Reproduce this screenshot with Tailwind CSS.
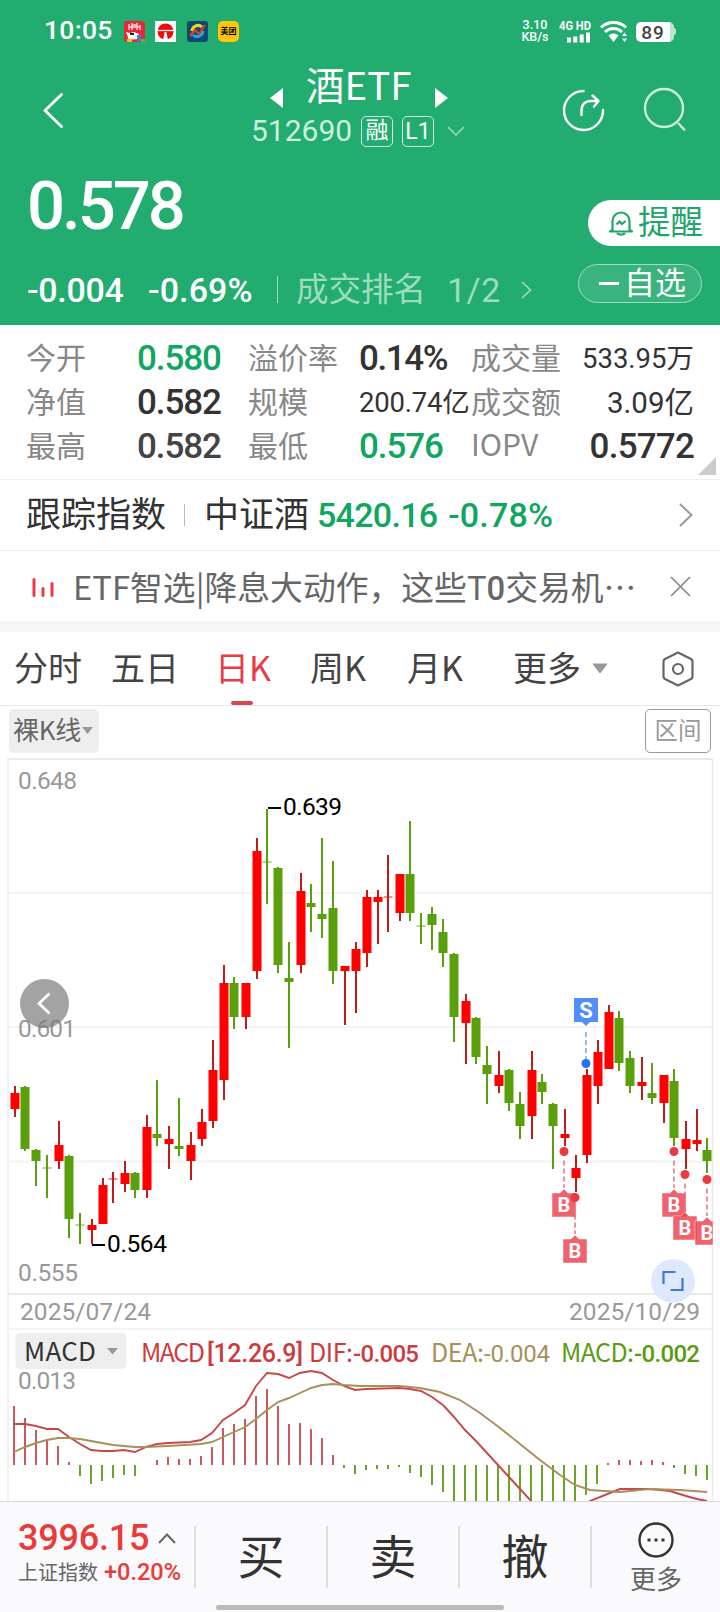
<!DOCTYPE html>
<html lang="zh-CN">

<head>
    <meta charset="UTF-8">
    <meta name="viewport" content="width=device-width, initial-scale=1.0">
    <title>酒ETF 512690</title>
    <script src="https://cdn.jsdelivr.net/npm/@tailwindcss/browser@4"></script>
</head>

<body class="w-[720px] h-[1612px] overflow-hidden bg-white font-['Roboto','Noto_Sans_CJK_SC',sans-serif] text-[#333] whitespace-nowrap">

    <!-- header -->
    <header class="h-[325px] bg-[#22ac6f] text-white">
        <!-- status bar -->
        <div class="h-[63px] flex items-center pl-[44px] pr-[44px]">
            <span class="w-[80px] text-[26.500px] font-medium leading-none tracking-[0.300px] -mt-[2px]">10:05</span>
            <svg class="w-[21px] h-[21px]" viewBox="0 0 21 21">
                <rect width="21" height="21" rx="3" fill="#e5283a" />
                <path d="M5 3v6M8 2v7M8 4h5M13 2v7M16 4v5M5 6h11" stroke="#ffd9d9" stroke-width="1.4" fill="none" />
                <path d="M2 11l4 1 4-1 5 2-2 5-8 1z" fill="#fff" />
                <path d="M6 13h4" stroke="#222" stroke-width="2" />
                <rect x="3" y="18" width="5" height="3" fill="#fbb917" />
                <rect x="13" y="14" width="4" height="6" fill="#3b7de0" />
                <rect x="17" y="18" width="4" height="3" fill="#5ab82f" />
            </svg>
            <svg class="w-[21px] h-[21px] ml-[10px]" viewBox="0 0 21 21">
                <rect width="21" height="21" fill="#fff" />
                <circle cx="10.5" cy="10.5" r="8" fill="#f00a0a" />
                <path d="M2 9.5h17" stroke="#fff" stroke-width="1.3" />
                <path d="M9.700 11h1.600l1.700 8H8z" fill="#fff" />
            </svg>
            <svg class="w-[21px] h-[21px] ml-[11px]" viewBox="0 0 21 21">
                <rect width="21" height="21" rx="3" fill="#0b4a70" />
                <path d="M5 10a6 6 0 0 1 10-4" stroke="#f7d21b" stroke-width="3" fill="none" />
                <path d="M16 10a6 6 0 0 1-10 4" stroke="#1fa5ea" stroke-width="3" fill="none" />
                <path d="M3 15l5-6 4 4 6-9" stroke="#e33b2e" stroke-width="2.2" fill="none" />
            </svg>
            <span class="w-[21px] h-[21px] ml-[10px] rounded-[5px] bg-[#ffc60a] text-black text-[8px] font-bold leading-[21px] text-center">美团</span>
            <div class="ml-auto w-[28px] text-[12.500px] font-medium leading-[12px] flex flex-col items-center -mt-[2px]">
                <span>3.10</span>
                <span>KB/s</span>
            </div>
            <svg class="ml-[10px] -mt-[4px] w-[34px] h-[28px]" viewBox="0 -4 34 28">
                <text x="0" y="9.500" font-size="12" font-weight="700" fill="#fff" textLength="32" lengthAdjust="spacingAndGlyphs">4G HD</text>
                <path d="M10 22.500v-5M16.300 22.500v-6M22.700 22.500v-8M29 22.500v-10" stroke="#fff" stroke-width="4" />
            </svg>
            <svg class="ml-[7px] w-[28px] h-[24px]" viewBox="0 0 28 24">
                <path d="M1 7.500a18 18 0 0 1 25 0M5 12a12 12 0 0 1 17 0" stroke="#fff" stroke-width="3" fill="none" />
                <path d="M8.500 15.500a7 7 0 0 1 10 0L13.500 22z" fill="#fff" />
                <path d="M22 16l2.500-3.500L27 16zM22 18.500h5L24.500 22z" fill="#fff" />
            </svg>
            <div class="ml-[8px] w-[38px] h-[20px] rounded-[5px] bg-white text-[#444] text-[19px] font-medium leading-[21px] text-center tracking-[1px] border-r-[4px] border-[#b9e5cf]">89</div>
            <span class="w-[2px] h-[7px] bg-[#b9e5cf] rounded-r"></span>
        </div>

        <!-- title row -->
        <div class="h-[97px] flex">
            <svg class="w-[22px] h-[36px] ml-[42px] mt-[30px]" viewBox="0 0 22 36">
                <path d="M19.500 1.500L3 17.500 19.500 33.500" fill="none" stroke="#fff" stroke-width="2.800" stroke-linecap="round" stroke-linejoin="round" />
            </svg>
            <div class="ml-[187px] w-[216px] flex flex-col">
                <div class="h-[48px] flex items-center font-['Noto_Sans_CJK_SC']">
                    <svg class="w-[14px] h-[20px] ml-[19px] mt-[22px]" viewBox="0 0 14 20"><path d="M0 10L13 0v20z" fill="#fff" /></svg>
                    <span class="ml-[22px] w-[108px] text-[38.500px] leading-none -mt-[7px]">酒ETF</span>
                    <svg class="w-[14px] h-[20px] ml-[20px] mt-[22px]" viewBox="0 0 14 20"><path d="M14 10L1 0v20z" fill="#fff" /></svg>
                </div>
                <div class="h-[40px] flex items-center">
                    <span class="w-[101px] text-[30px] leading-none text-[#cdf0de]">512690</span>
                    <span class="ml-[9px] w-[32px] h-[31px] border border-[#cdf0de] rounded-[5px] text-center text-[23px] leading-[28px]">融</span>
                    <span class="ml-[9px] w-[32px] h-[31px] border border-[#cdf0de] rounded-[5px] text-center text-[23px] leading-[29px]">L1</span>
                    <svg class="ml-[13px] w-[18px] h-[10px]" viewBox="0 0 18 10"><path d="M1 1l8 8 8-8" fill="none" stroke="#a0dcbf" stroke-width="1.500" /></svg>
                </div>
            </div>
            <svg class="ml-[94px] mt-[25px] w-[44px] h-[44px]" viewBox="0 0 44 44">
                <path d="M22.500 3A19.500 19.500 0 1 0 42 22" fill="none" stroke="#fff" stroke-width="2.400" stroke-linecap="round" />
                <path d="M20.500 27v-4c0-7 4-10 9-10h7M31.500 7.500l6 5.500-4.500 5.500" fill="none" stroke="#fff" stroke-width="2.400" stroke-linecap="round" stroke-linejoin="round" />
            </svg>
            <svg class="ml-[38px] mt-[24px] w-[44px] h-[46px]" viewBox="0 0 44 46">
                <circle cx="21" cy="21" r="19" fill="none" stroke="#cdf0de" stroke-width="2.400" />
                <path d="M35 36l7 7.500" stroke="#cdf0de" stroke-width="2.400" />
            </svg>
        </div>

        <!-- price -->
        <div class="h-[92px] flex">
            <span class="ml-[27px] mt-[13px] text-[67px] font-medium leading-none tracking-[-3px]">0.578</span>
            <div class="ml-auto mt-[40px] w-[132px] h-[46px] rounded-l-full bg-white text-[#22a56b] flex items-center">
                <svg class="ml-[20px] w-[26px] h-[27px]" viewBox="0 0 26 27">
                    <path d="M4.500 20V11a8.500 8.500 0 0 1 17 0v9l2.500 1.500H2z" fill="none" stroke="#22a56b" stroke-width="2.200" stroke-linejoin="round" />
                    <path d="M9 23a4.500 3 0 0 0 8 0M8.500 14.500l3-3 2.500 2.500 3.500-3" fill="none" stroke="#22a56b" stroke-width="2.200" />
                </svg>
                <span class="ml-[4px] text-[32.500px] leading-none mt-px">提醒</span>
            </div>
        </div>
        <div class="h-[73px] flex">
            <div class="flex items-center h-[76px] text-[34px] font-medium leading-none tracking-[-0.300px]">
                <span class="ml-[27px] w-[121px]">-0.004</span>
                <span class="w-[129px] tracking-[0.100px]">-0.69%</span>
            </div>
            <div class="flex items-center h-[75px] text-[#9edcbe]">
                <span class="w-px h-[27px] bg-[#9edcbe]"></span>
                <span class="ml-[18px] text-[32.500px] leading-none mt-px">成交排名</span>
                <span class="ml-[21px] text-[34px] leading-none tracking-[0.500px]">1/2</span>
                <svg class="ml-[20px] w-[11px] h-[18px]" viewBox="0 0 11 18"><path d="M1 1l8.500 8L1 17" fill="none" stroke="#9edcbe" stroke-width="1.700" /></svg>
            </div>
            <div class="ml-auto mr-[18px] mt-[12px] w-[124px] h-[39px] rounded-full border border-[#a0dcbf] bg-[#3ab47f] flex items-center">
                <span class="ml-[20px] w-[20px] h-[2.500px] bg-white"></span>
                <span class="ml-[5px] text-[31px] leading-none">自选</span>
            </div>
        </div>
    </header>

    <!-- quote grid -->
    <section class="relative h-[155px] pt-[12px] border-b border-[#eee] text-[30px] leading-[44px]">
        <div class="h-[44px] flex items-center">
            <span class="ml-[26px] w-[111px] text-[#888]">今开</span>
            <span class="w-[111px] text-[35px] font-medium text-[#0fa65f] tracking-[-1.100px]">0.580</span>
            <span class="w-[111px] text-[#888]">溢价率</span>
            <span class="w-[112px] text-[35px] font-medium tracking-[-1.400px]">0.14%</span>
            <span class="text-[#888]">成交量</span>
            <span class="ml-auto mr-[26px] text-[27.500px]">533.95万</span>
        </div>
        <div class="h-[44px] flex items-center">
            <span class="ml-[26px] w-[111px] text-[#888]">净值</span>
            <span class="w-[111px] text-[35px] font-medium tracking-[-1.100px]">0.582</span>
            <span class="w-[111px] text-[#888]">规模</span>
            <span class="w-[112px] text-[27.500px] tracking-[-0.200px]">200.74亿</span>
            <span class="text-[#888]">成交额</span>
            <span class="ml-auto mr-[26px] text-[29.500px]">3.09亿</span>
        </div>
        <div class="h-[44px] flex items-center">
            <span class="ml-[26px] w-[111px] text-[#888]">最高</span>
            <span class="w-[111px] text-[35px] font-medium text-[#444] tracking-[-1.100px]">0.582</span>
            <span class="w-[111px] text-[#888]">最低</span>
            <span class="w-[112px] text-[35px] font-medium text-[#0fa65f] tracking-[-1.100px]">0.576</span>
            <span class="text-[#888] font-['Noto_Sans_CJK_SC'] -mt-[8px]">IOPV</span>
            <span class="ml-auto mr-[26px] text-[35px] font-medium tracking-[-0.800px]">0.5772</span>
        </div>
        <svg class="absolute right-[4px] bottom-[4px] w-[18px] h-[18px]" viewBox="0 0 18 18"><path d="M18 0v18H0z" fill="#ccc" /></svg>
    </section>

    <!-- tracked index -->
    <section class="h-[71px] flex items-center border-b border-[#eee] leading-none">
        <span class="ml-[26px] w-[158px] text-[35px]">跟踪指数</span>
        <span class="w-px h-[22px] bg-[#bbb]"></span>
        <span class="ml-[19px] w-[113px] text-[35px]">中证酒</span>
        <span class="w-[131px] text-[34px] font-medium text-[#0fa65f] tracking-[-0.700px]">5420.16</span>
        <span class="text-[34px] font-medium text-[#0fa65f] tracking-[0.200px]">-0.78%</span>
        <svg class="ml-auto mr-[27px] w-[14px] h-[24px]" viewBox="0 0 14 24"><path d="M1 1l11.500 11L1 23" fill="none" stroke="#999" stroke-width="2" /></svg>
    </section>

    <!-- news strip -->
    <section class="h-[70px] flex items-center">
        <svg class="ml-[31px] mt-[3px] w-[25px] h-[19px]" viewBox="0 0 25 19">
            <path d="M3 1.500v16M12 10.500v7M21 5.500v12" stroke="#e93b45" stroke-width="3" stroke-linecap="round" />
        </svg>
        <span class="ml-[17px] mt-[3px] w-[569px] text-[32.800px] leading-none text-[#666] font-['Noto_Sans_CJK_SC']">ETF智选|降息大动作，这些T<span class="font-['Roboto'] font-medium">0</span>交易机…</span>
        <svg class="ml-auto mr-[29px] w-[21px] h-[21px]" viewBox="0 0 21 21"><path d="M1 1l19 19M20 1L1 20" stroke="#888" stroke-width="1.700" /></svg>
    </section>
    <div class="h-[11px] bg-[#f7f7f7]"></div>

    <!-- period tabs -->
    <nav class="h-[74px] flex items-center border-b border-[#e8e8e8] text-[34px] leading-none text-[#444] font-['Noto_Sans_CJK_SC']">
        <span class="ml-[14px] w-[97px] -mt-[4px]">分时</span>
        <span class="w-[104px] -mt-[4px]">五日</span>
        <div class="relative w-[95px] h-full flex items-center text-[#e93b45]">
            <span class="-mt-[4px]">日K</span>
            <span class="absolute left-[16px] bottom-0 w-[22px] h-[4px] rounded-full bg-[#d64550]"></span>
        </div>
        <span class="w-[97px] -mt-[4px]">周K</span>
        <span class="w-[106px] -mt-[4px]">月K</span>
        <span class="-mt-[4px]">更多</span>
        <svg class="ml-[11px] w-[16px] h-[11px]" viewBox="0 0 16 11"><path d="M1 1h14L8 10z" fill="#999" stroke="#999" stroke-linejoin="round" /></svg>
        <svg class="ml-auto mr-[25px] w-[34px] h-[36px]" viewBox="0 0 34 36">
            <path d="M17 1.500l13 6.500q1.500 1 1.500 2.500v15q0 1.500-1.500 2.500L17 34.500 4 28q-1.500-1-1.500-2.500v-15Q2.500 9 4 8z" fill="none" stroke="#666" stroke-width="2.200" stroke-linejoin="round" />
            <circle cx="17" cy="18" r="5" fill="none" stroke="#666" stroke-width="2.200" />
        </svg>
    </nav>

    <!-- chart toolbar -->
    <div class="h-[51px] flex justify-between pt-[3px] pl-[9px] pr-[9px]">
        <div class="w-[90px] h-[44px] rounded-[5px] bg-[#eee] flex items-center text-[26px] leading-none text-[#666] font-['Noto_Sans_CJK_SC']">
            <span class="ml-[4px] -mt-[4px] tracking-[-0.300px]">裸K线</span>
            <svg class="ml-[1px] w-[11px] h-[8px]" viewBox="0 0 11 8"><path d="M0 0h11L5.500 7z" fill="#999" /></svg>
        </div>
        <div class="w-[66px] h-[44px] rounded-[5px] border border-[#999] text-[23.500px] leading-[42px] text-center text-[#999]">区间</div>
    </div>

    <!-- k line and macd -->
    <svg class="block w-[720px] h-[744px]" viewBox="0 757 720 744">
        <g fill="none" stroke="#ebebeb" stroke-width="2">
            <path d="M8 759H713M8 1294H713" />
            <path d="M8 758V1501M712.500 758V1501" stroke-width="1.500" />
            <path d="M8 893H712M8 1027H712M8 1161.500H712M8 1329H712" stroke="#f4f4f4" />
        </g>
        <g font-size="24.500" fill="#999">
            <text x="18" y="789" textLength="59">0.648</text>
            <text x="18" y="1037" textLength="58">0.601</text>
            <text x="18" y="1281" textLength="60">0.555</text>
            <text x="20" y="1320" textLength="131">2025/07/24</text>
        </g>
        <g id="candles"></g>
        <g font-size="24.500" fill="#000">
            <path d="M268 808h13M92 1245h13" stroke="#000" stroke-width="2" />
            <text x="283" y="815" textLength="59">0.639</text>
            <text x="107" y="1252" textLength="60">0.564</text>
        </g>
        <circle cx="44.500" cy="1003.500" r="24.500" fill="#777" fill-opacity="0.680" />
        <path d="M49.500 993.500l-10.500 10 10.500 10" fill="none" stroke="#fff" stroke-width="2.800" />
        <g id="trades"></g>
        <circle cx="673" cy="1281" r="22" fill="#dfe9fd" />
        <path d="M663.500 1284v-12h12M682.500 1278v12h-12" fill="none" stroke="#3a7bd5" stroke-width="2.200" />
        <text x="569" y="1320" font-size="24.500" fill="#999" textLength="131">2025/10/29</text>

        <!-- macd header -->
        <rect x="15.500" y="1333" width="111" height="36" rx="5" fill="#eee" />
        <path d="M107 1348h11l-5.500 6.500z" fill="#999" />
        <g font-family="Noto Sans CJK SC" font-size="25">
            <text x="24" y="1361" font-size="26" fill="#333" textLength="72">MACD</text>
            <text x="141" y="1361.500" fill="#cc3b40" textLength="64">MACD</text>
            <text x="207" y="1361.500" fill="#cc3b40" font-family="Roboto" font-weight="500" textLength="96">[12.26.9]</text>
            <text x="309" y="1361.500" fill="#cc3b40" textLength="44">DIF:</text>
            <text x="353" y="1361.500" fill="#cc3b40" font-family="Roboto" font-weight="500" font-size="24" textLength="66">-0.005</text>
            <text x="431" y="1361.500" fill="#a98f5c" textLength="53">DEA:</text>
            <text x="484" y="1361.500" fill="#a98f5c" font-family="Roboto" font-size="24" textLength="66">-0.004</text>
            <text x="561" y="1361.500" fill="#5b9b12" textLength="73">MACD:</text>
            <text x="634" y="1361.500" fill="#5b9b12" font-family="Roboto" font-weight="500" font-size="24" textLength="66">-0.002</text>
        </g>
        <text x="18" y="1389" font-size="24.500" fill="#999" textLength="58">0.013</text>
        <g id="macd"></g>
        <path id="dif" fill="none" stroke="#c8474c" stroke-width="1.900" />
        <path id="dea" fill="none" stroke="#a98f5c" stroke-width="1.900" />
    </svg>

    <!-- bottom bar -->
    <footer class="relative h-[111px] bg-[#fafafc] border-t border-[#d8d8da] flex items-center">
        <div class="w-[194px] h-full pl-[18px] pt-[16px]">
            <div class="flex items-center h-[40px] text-[#e93b38]">
                <span class="text-[36px] font-medium leading-none tracking-[-0.200px]">3996.15</span>
                <svg class="ml-[9px] w-[18px] h-[11px]" viewBox="0 0 18 11"><path d="M1 10l8-8.500L17 10" fill="none" stroke="#666" stroke-width="2" /></svg>
            </div>
            <div class="flex items-center h-[30px]">
                <span class="w-[86px] text-[20px] leading-none text-[#666]">上证指数</span>
                <span class="text-[23.500px] font-medium leading-none text-[#e93b38]">+0.20%</span>
            </div>
        </div>
        <div class="w-[132px] h-[62px] border-l-2 border-[#ddd] flex items-center justify-center text-[47px] leading-none">买</div>
        <div class="w-[132px] h-[62px] border-l-2 border-[#ddd] flex items-center justify-center text-[47px] leading-none">卖</div>
        <div class="w-[132px] h-[62px] border-l-2 border-[#ddd] flex items-center justify-center text-[47px] leading-none">撤</div>
        <div class="w-[130px] h-[62px] border-l-2 border-[#ddd] flex flex-col items-center justify-center">
            <svg class="w-[38px] h-[38px] shrink-0" viewBox="0 0 38 38">
                <circle cx="19" cy="19" r="16.500" fill="none" stroke="#333" stroke-width="2.400" />
                <path d="M10.500 19h3M17.500 19h3M24.500 19h3" stroke="#333" stroke-width="3" />
            </svg>
            <span class="mt-[8px] text-[26px] leading-none text-[#666]">更多</span>
        </div>
        <span class="absolute left-[216px] bottom-[2px] w-[288px] h-[5px] rounded-full bg-[#bbb]"></span>
    </footer>
</body>

<script>
    // [x, high, body top, body bottom, low, up]
    const candles = [
        [15, 1086, 1093, 1109, 1117, 1], [25, 1086, 1087, 1149, 1151, 0], [36, 1149, 1150, 1161, 1186, 0], [47, 1155, 1168, 1168, 1198, 0],
        [59, 1121, 1145, 1161, 1169, 1], [69, 1155, 1156, 1219, 1238, 0], [80, 1213, 1225, 1225, 1244, 0], [92, 1219, 1225, 1230, 1244, 1],
        [103, 1178, 1185, 1224, 1224, 1], [113, 1172, 1179, 1179, 1203, 1], [125, 1161, 1173, 1184, 1192, 1], [135, 1172, 1173, 1190, 1198, 0],
        [147, 1115, 1127, 1190, 1198, 1], [157, 1080, 1134, 1138, 1146, 0], [169, 1126, 1139, 1144, 1169, 1], [179, 1098, 1146, 1149, 1156, 0],
        [191, 1132, 1145, 1161, 1180, 1], [202, 1109, 1122, 1139, 1146, 1], [213, 1040, 1070, 1121, 1128, 1], [224, 965, 983, 1080, 1100, 1],
        [234, 977, 983, 1017, 1029, 0], [246, 983, 983, 1017, 1029, 1], [257, 838, 851, 971, 979, 1], [267, 809, 862, 862, 904, 0],
        [278, 867, 868, 965, 973, 0], [289, 942, 978, 982, 1048, 0], [301, 873, 891, 965, 973, 1], [311, 884, 903, 907, 932, 0],
        [322, 838, 914, 919, 938, 0], [333, 861, 908, 971, 984, 0], [345, 966, 966, 971, 1025, 1], [356, 942, 949, 971, 1013, 1],
        [367, 890, 897, 953, 967, 1], [378, 890, 897, 902, 944, 1], [388, 855, 897, 897, 932, 1], [400, 874, 874, 913, 921, 1],
        [410, 821, 874, 913, 921, 0], [421, 913, 926, 926, 944, 0], [432, 907, 914, 925, 950, 0], [443, 919, 932, 953, 967, 0],
        [454, 953, 954, 1017, 1042, 0], [466, 994, 1001, 1023, 1064, 1], [476, 1017, 1018, 1057, 1064, 0], [487, 1046, 1065, 1074, 1104, 0],
        [499, 1051, 1075, 1086, 1093, 1], [509, 1069, 1070, 1103, 1111, 0], [520, 1092, 1104, 1126, 1139, 0], [532, 1051, 1070, 1116, 1139, 1],
        [542, 1074, 1082, 1092, 1104, 0], [553, 1103, 1104, 1126, 1169, 0], [565, 1109, 1134, 1138, 1146, 1], [576, 1155, 1168, 1178, 1192, 1],
        [587, 1069, 1075, 1155, 1163, 1], [598, 1040, 1052, 1086, 1104, 1], [609, 1005, 1012, 1069, 1069, 1], [619, 1011, 1018, 1063, 1071, 0],
        [630, 1051, 1058, 1086, 1093, 0], [642, 1057, 1082, 1086, 1100, 1], [652, 1063, 1093, 1098, 1104, 0], [664, 1075, 1075, 1103, 1123, 1],
        [674, 1069, 1081, 1138, 1146, 0], [686, 1121, 1139, 1149, 1169, 1], [697, 1109, 1140, 1144, 1151, 1], [707, 1138, 1150, 1161, 1173, 0]
    ]
    // [x, dot y, label top]
    const buys = [[564, 1151.5, 1193], [575, 1197.5, 1239], [674, 1151.5, 1193], [685, 1174.5, 1216], [707, 1179.5, 1221]]
    // bar ends, zero line at 1465
    const bars = [1406, 1418, 1430, 1440, 1446, 1462, 1476, 1484, 1481, 1478, 1475, 1476, 1465, 1460, 1457, 1459,
        1459, 1456, 1447, 1428, 1424, 1419, 1396, 1389, 1406, 1424, 1423, 1429, 1438, 1455, 1468, 1474,
        1470, 1469, 1469, 1467, 1473, 1477, 1485, 1492, 1501, 1501, 1501, 1501, 1501, 1501, 1501, 1501,
        1501, 1501, 1501, 1501, 1495, 1484, 1463, 1460, 1460, 1461, 1460, 1462, 1468, 1474, 1476, 1480]
    const dif = '14,1424 25,1424 36,1426 47,1429 58,1429 69,1437 80,1444 91,1450 102,1451 113,1451 124,1450 135,1452 146,1447 157,1444 168,1443 190,1442 201,1440 212,1433 223,1420 234,1413 245,1405 256,1386 267,1373 278,1374 289,1378 300,1373 311,1371 322,1373 333,1380 344,1386 355,1390 366,1389 400,1388 410,1389 421,1391 432,1397 443,1405 454,1417 465,1430 476,1441 487,1453 498,1465 509,1477 520,1489 532,1502 575,1512 590,1501 610,1493 620,1489 650,1489 670,1491 686,1496 697,1499 707,1501'
    const dea = '14,1452 25,1447 36,1443 47,1440 58,1438 69,1438 80,1439 91,1441 113,1445 135,1447 146,1447 168,1446 201,1444 212,1442 223,1437 234,1432 245,1427 256,1419 267,1410 278,1402 289,1398 300,1393 311,1388 322,1385 333,1384 344,1385 360,1386 400,1386 420,1388 440,1392 460,1400 480,1413 500,1428 520,1444 540,1460 560,1475 575,1485 590,1490 620,1492 650,1489 680,1490 707,1492'

    let html = ''
    candles.forEach(([x, high, top, bottom, low, up]) => {
        const color = up ? '#ff0000' : '#5aa00c'
        html += `<path d="M${x} ${high}V${low}" stroke="${up ? '#c01c1c' : '#5aa00c'}" stroke-width="2"/>`
        html += bottom - top < 2
            ? `<path d="M${x - 4.5} ${top}h9" stroke="${color}" stroke-opacity="0.6" stroke-width="1.5"/>`
            : `<rect x="${x - 4.5}" y="${top}" width="9" height="${bottom - top}" fill="${color}"/>`
    })
    document.getElementById('candles').innerHTML = html

    html = `<path d="M574 998h24v24h-8l-4 4-4-4h-8z" fill="#4f8ff7"/>
        <text x="586" y="1018" font-size="22" font-weight="700" fill="#fff" text-anchor="middle">S</text>
        <path d="M586 1032V1060" stroke="#7fa9d6" stroke-width="1.6" stroke-dasharray="5 3"/>
        <circle cx="586" cy="1063.5" r="4.5" fill="#2474ee"/>`
    buys.forEach(([x, y, top]) => {
        const right = Math.min(x + 12, 713)
        html += `<path d="M${x - 12} ${top}h8l4-4 4 4H${right}v24H${x - 12}z" fill="#ed3b4b" fill-opacity="0.8" stroke="#fff" stroke-opacity="0.6" stroke-width="0.8"/>
            <text x="${x}" y="${top + 19}" font-size="20" font-weight="700" fill="#fff" text-anchor="middle">B</text>
            <path d="M${x} ${y + 9}V${top - 5}" stroke="#e37b84" stroke-width="1.6" stroke-dasharray="5 3"/>
            <circle cx="${x}" cy="${y}" r="4.5" fill="#ea3943"/>`
    })
    document.getElementById('trades').innerHTML = html

    html = ''
    bars.forEach((y, i) => {
        if (y == 1465) return
        html += `<path d="M${14 + i * 11} 1465V${y}" stroke="${y < 1465 ? '#c4474d' : '#5b9b12'}" stroke-width="1.8"/>`
    })
    document.getElementById('macd').innerHTML = html
    document.getElementById('dif').setAttribute('d', 'M' + dif)
    document.getElementById('dea').setAttribute('d', 'M' + dea)
</script>

</html>
